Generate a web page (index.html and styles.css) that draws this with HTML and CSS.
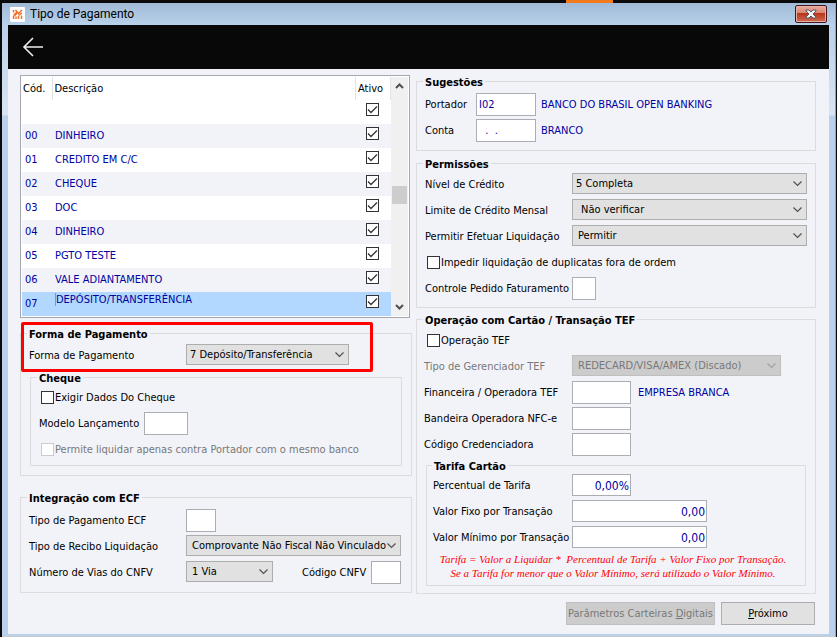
FILE: index.html
```
<!DOCTYPE html>
<html lang="pt-BR">
<head>
<meta charset="utf-8">
<title>Tipo de Pagamento</title>
<link rel="stylesheet" href="styles.css">
</head>
<body>

<div class="backdrop"><span class="accent"></span></div>

<div class="window">
  <div class="titlebar">
    <svg class="logo" viewBox="0 0 15 15">
      <rect width="15" height="15" rx="1" fill="#fff"/>
      <g stroke="#f0702a" stroke-width="1.5" fill="none">
        <path d="M3.500 3v2.500M5.500 3l2.500 3M12 3L8 7M3.500 8.500L7 5M3.500 12V9.500L7 6.500M12 6L8.500 8.500M6 12V9.500M8.500 9v3M11.500 8.500V12"/>
      </g>
    </svg>
    <span class="title">Tipo de Pagamento</span>
    <button class="close" aria-label="Fechar">
      <svg viewBox="0 0 12 10" width="12" height="10">
        <path d="M1 1h3l2 2 2-2h3v1L8 5l3 3v1H8L6 7 4 9H1V8l3-3-3-3z" fill="#f4f4f4" stroke="#535666"/>
      </svg>
    </button>
  </div>

  <div class="client">
    <div class="toolbar">
      <button class="back" aria-label="Voltar">
        <svg viewBox="0 0 22 20" width="22" height="20">
          <path d="M11 1L2 10l9 9M2 10h19" fill="none" stroke="#eee" stroke-width="1.6"/>
        </svg>
      </button>
    </div>

    <div class="content">
      <div class="column left">
        <div class="grid">
          <table>
            <thead>
              <tr><th class="code">Cód.</th><th>Descrição</th><th class="active">Ativo</th></tr>
            </thead>
            <tbody>
              <tr><td></td><td></td><td><input type="checkbox" aria-label="Ativo" checked></td></tr>
              <tr><td>00</td><td>DINHEIRO</td><td><input type="checkbox" aria-label="Ativo 00" checked></td></tr>
              <tr><td>01</td><td>CREDITO EM C/C</td><td><input type="checkbox" aria-label="Ativo 01" checked></td></tr>
              <tr><td>02</td><td>CHEQUE</td><td><input type="checkbox" aria-label="Ativo 02" checked></td></tr>
              <tr><td>03</td><td>DOC</td><td><input type="checkbox" aria-label="Ativo 03" checked></td></tr>
              <tr><td>04</td><td>DINHEIRO</td><td><input type="checkbox" aria-label="Ativo 04" checked></td></tr>
              <tr><td>05</td><td>PGTO TESTE</td><td><input type="checkbox" aria-label="Ativo 05" checked></td></tr>
              <tr><td>06</td><td>VALE ADIANTAMENTO</td><td><input type="checkbox" aria-label="Ativo 06" checked></td></tr>
              <tr class="selected"><td>07</td><td class="editing"><span>DEPÓSITO/TRANSFERÊNCIA</span></td><td><input type="checkbox" aria-label="Ativo 07" checked></td></tr>
            </tbody>
          </table>
          <div class="scrollbar">
            <svg viewBox="0 0 9 6" width="9" height="6"><path d="M1 5l3.5-3.5L8 5" fill="none" stroke="#505050" stroke-width="2"/></svg>
            <span class="thumb"></span>
            <svg viewBox="0 0 9 6" width="9" height="6"><path d="M1 1l3.5 3.5L8 1" fill="none" stroke="#505050" stroke-width="2"/></svg>
          </div>
        </div>

        <fieldset class="payment">
          <legend>Forma de Pagamento</legend>
          <div class="row">
            <label for="forma">Forma de Pagamento</label>
            <select id="forma" class="w163 tight"><option>7 Depósito/Transferência</option></select>
          </div>
          <span class="highlight"></span>

          <fieldset class="cheque">
            <legend>Cheque</legend>
            <div class="row check"><input type="checkbox" id="exigir"><label for="exigir">Exigir Dados Do Cheque</label></div>
            <div class="row">
              <label for="modelo">Modelo Lançamento</label>
              <input type="text" id="modelo" class="w44">
            </div>
            <div class="row check"><input type="checkbox" id="permite" disabled><label for="permite">Permite liquidar apenas contra Portador com o mesmo banco</label></div>
          </fieldset>
        </fieldset>

        <fieldset class="ecf">
          <legend>Integração com ECF</legend>
          <div class="row">
            <label for="tipo-ecf">Tipo de Pagamento ECF</label>
            <input type="text" id="tipo-ecf" class="w30">
          </div>
          <div class="row">
            <label for="recibo">Tipo de Recibo Liquidação</label>
            <select id="recibo" class="w215"><option>Comprovante Não Fiscal Não Vinculado</option></select>
          </div>
          <div class="row">
            <label for="vias">Número de Vias do CNFV</label>
            <select id="vias" class="w87"><option>1 Via</option></select>
            <label for="cnfv" class="cnfv">Código CNFV</label>
            <input type="text" id="cnfv" class="w30">
          </div>
        </fieldset>
      </div>

      <div class="column right">
        <fieldset class="suggestions">
          <legend>Sugestões</legend>
          <div class="row">
            <label for="portador">Portador</label>
            <input type="text" id="portador" class="w60" value="I02">
            <span class="value">BANCO DO BRASIL OPEN BANKING</span>
          </div>
          <div class="row">
            <label for="conta">Conta</label>
            <input type="text" id="conta" class="w60" value="  .  .">
            <span class="value">BRANCO</span>
          </div>
        </fieldset>

        <fieldset class="permissions">
          <legend>Permissões</legend>
          <div class="row">
            <label for="nivel">Nível de Crédito</label>
            <select id="nivel" class="w235 tight"><option>5 Completa</option></select>
          </div>
          <div class="row">
            <label for="limite">Limite de Crédito Mensal</label>
            <select id="limite" class="w235 indent"><option>Não verificar</option></select>
          </div>
          <div class="row">
            <label for="efetuar">Permitir Efetuar Liquidação</label>
            <select id="efetuar" class="w235"><option>Permitir</option></select>
          </div>
          <div class="row check"><input type="checkbox" id="impedir"><label for="impedir">Impedir liquidação de duplicatas fora de ordem</label></div>
          <div class="row">
            <label for="controle">Controle Pedido Faturamento</label>
            <input type="text" id="controle" class="w24">
          </div>
        </fieldset>

        <fieldset class="card">
          <legend>Operação com Cartão / Transação TEF</legend>
          <div class="row check"><input type="checkbox" id="tef"><label for="tef">Operação TEF</label></div>
          <div class="row disabled">
            <label for="gerenciador">Tipo de Gerenciador TEF</label>
            <select id="gerenciador" class="w209" disabled><option>REDECARD/VISA/AMEX (Discado)</option></select>
          </div>
          <div class="row">
            <label for="financeira">Financeira / Operadora TEF</label>
            <input type="text" id="financeira" class="w59">
            <span class="value">EMPRESA BRANCA</span>
          </div>
          <div class="row">
            <label for="bandeira">Bandeira Operadora NFC-e</label>
            <input type="text" id="bandeira" class="w59">
          </div>
          <div class="row">
            <label for="credenciadora">Código Credenciadora</label>
            <input type="text" id="credenciadora" class="w59">
          </div>

          <fieldset class="fee">
            <legend>Tarifa Cartão</legend>
            <div class="row">
              <label for="percentual">Percentual de Tarifa</label>
              <input type="text" id="percentual" class="w59 number" value="0,00%">
            </div>
            <div class="row">
              <label for="fixo">Valor Fixo por Transação</label>
              <input type="text" id="fixo" class="w135 number" value="0,00">
            </div>
            <div class="row">
              <label for="minimo">Valor Mínimo por Transação</label>
              <input type="text" id="minimo" class="w135 number" value="0,00">
            </div>
            <p class="note">Tarifa = Valor a Liquidar *&nbsp; Percentual de Tarifa + Valor Fixo por Transação.<br>Se a Tarifa for menor que o Valor Mínimo, será utilizado o Valor Mínimo.</p>
          </fieldset>
        </fieldset>
      </div>
    </div>

    <div class="actions">
      <button class="btn wallets" disabled>Parâmetros Carteiras <u>D</u>igitais</button>
      <button class="btn next"><u>P</u>róximo</button>
    </div>
  </div>
</div>

</body>
</html>
```

FILE: styles.css
```
* {
    box-sizing: border-box;
}

body {
    margin: 0;
    min-height: 100vh;
    display: flex;
    flex-direction: column;
    background-color: #0a0a0a;
    color: #000;
    font-family: "DejaVu Sans Condensed", "Noto Sans", sans-serif;
    font-size: 11px;
    line-height: 15px;
}

button, input, select {
    font: inherit;
    color: inherit;
    margin: 0;
}

/* Strip of the main program seen behind the window */
.backdrop {
    height: 3px;
    display: flex;
}

.accent {
    width: 47px;
    margin-left: 566px;
    background-color: #f07a1c;
}

.window {
    flex: 1;
    display: flex;
    flex-direction: column;
    margin: 0 1px 0 2px;
    padding: 0 6px 2px;
    border-right: 1px solid #38c8e8;
    border-bottom: 1px solid #c8ccd0;
    background: linear-gradient(#a0bad6, #b9d1ea 22px, #d8e5f3 112px, #b9d1ea 113px);
}

/* Title bar */
.titlebar {
    height: 22px;
    display: flex;
    align-items: center;
    padding: 0 2px;
}

.logo {
    width: 15px;
    height: 15px;
}

.title {
    flex: 1;
    margin-left: 5px;
    font-family: Roboto, sans-serif;
    font-size: 12px;
}

.close {
    width: 32px;
    height: 18px;
    padding: 0;
    display: flex;
    align-items: center;
    justify-content: center;
    border: 1px solid #47131c;
    border-radius: 2px;
    background: linear-gradient(#e9a99b, #d98573 45%, #b8351b 46%, #cf6b52);
    box-shadow: inset 0 0 0 1px #e5b0a5;
}

.client {
    flex: 1;
    background-color: #f2f3f9;
}

.toolbar {
    height: 44px;
    display: flex;
    align-items: center;
    padding-left: 14px;
    background-color: #080808;
}

.back {
    padding: 0;
    border: none;
    background: none;
    display: flex;
}

.content {
    display: grid;
    grid-template-columns: 392fr 400fr;
    gap: 4px;
    padding: 5px 13px 0 12px;
}

.column {
    display: flex;
    flex-direction: column;
}

/* Payment type list */
.grid {
    display: flex;
    margin: 1px 2px 8px 0;
    padding: 1px;
    border: 1px solid #a5a7b0;
    background-color: #fff;
}

table {
    flex: 1;
    border-collapse: collapse;
    table-layout: fixed;
    color: #0000a0;
}

th {
    height: 23px;
    padding: 0 2px;
    border-right: 1px solid #e2e2e2;
    color: #000;
    font-weight: normal;
    text-align: left;
}

th.code {
    width: 30px;
    padding: 0 1px;
}

th.active {
    width: 35px;
}

td {
    height: 24px;
    padding: 0 3px 2px;
}

td:last-child {
    padding: 3px 10px 0;
    vertical-align: top;
}

tbody tr:nth-child(even) {
    background-color: #f2f3f9;
}

tbody tr.selected {
    background-color: #b2d8ff;
}

.editing {
    vertical-align: top;
}

.editing span {
    border-left: 1px solid #b0a020;
}

.scrollbar {
    width: 17px;
    display: flex;
    flex-direction: column;
    align-items: center;
    padding: 6px 0;
    background-color: #f0f0f0;
}

.thumb {
    width: 15px;
    height: 18px;
    margin: 97px 0 auto;
    background-color: #cdcdcd;
}

/* Group boxes */
fieldset {
    min-width: 0;
    margin: 0;
    padding: 0 8px 8px;
    border: 1px solid #dcdcdf;
}

legend {
    margin-left: -2px;
    padding: 2px 2px 0;
    font-weight: bold;
    line-height: 13px;
}

.row {
    height: 23px;
    display: flex;
    align-items: flex-start;
}

.row + .row {
    margin-top: 3px;
}

.row label, .value {
    line-height: 24px;
    white-space: nowrap;
}

.value {
    color: #0000a0;
    margin-left: 5px;
}

input[type=text] {
    height: 23px;
    padding: 0 2px;
    border: 1px solid #abadb3;
    border-radius: 0;
    background-color: #fff;
    color: #0000a0;
}

input.number {
    height: 22px;
    padding: 1px 1px 0;
    font-size: 12px;
    text-align: right;
}

select {
    appearance: none;
    height: 21px;
    padding: 0 5px;
    border: 1px solid #adadad;
    border-radius: 0;
    background: #e1e1e1 url("data:image/svg+xml,%3Csvg xmlns='http://www.w3.org/2000/svg' width='9' height='6'%3E%3Cpath d='M.5.5l4 4 4-4' fill='none' stroke='%23505050' stroke-width='1.2'/%3E%3C/svg%3E") no-repeat right 4px center;
}

select.tight {
    padding: 0 3px;
}

select:disabled {
    opacity: 1;
    border-color: #bfbfbf;
    background-color: #ccc;
    background-image: url("data:image/svg+xml,%3Csvg xmlns='http://www.w3.org/2000/svg' width='9' height='6'%3E%3Cpath d='M.5.5l4 4 4-4' fill='none' stroke='%23a0a0a0' stroke-width='1.2'/%3E%3C/svg%3E");
    color: #787878;
}

input[type=checkbox] {
    appearance: none;
    display: block;
    width: 13px;
    height: 13px;
    border: 1px solid #333;
    background-color: #fff;
}

input[type=checkbox]:checked {
    background-image: url("data:image/svg+xml,%3Csvg xmlns='http://www.w3.org/2000/svg' width='11' height='11'%3E%3Cpath d='M1 5.5l3 3 6-6' fill='none' stroke='%23333' stroke-width='1.3'/%3E%3C/svg%3E");
}

input[type=checkbox]:disabled {
    border-color: #ccc;
}

.check {
    align-items: center;
    gap: 1px;
    padding-left: 2px;
}

.disabled label, input:disabled + label {
    color: #787878;
}

.w24 { width: 24px; }
.w30 { width: 30px; }
.w44 { width: 44px; }
.w59 { width: 59px; }
.w60 { width: 60px; }
.w87 { width: 87px; }
.w135 { width: 135px; }
.w163 { width: 163px; }
.w209 { width: 209px; }
.w215 { width: 215px; }
.w235 { width: 235px; }

/* Forma de Pagamento */
.payment {
    position: relative;
    margin-bottom: 14px;
    padding-top: 3px;
    padding-bottom: 9px;
}

.payment > .row label, .ecf .row label:first-child {
    width: 157px;
}

.highlight {
    position: absolute;
    top: -12px;
    left: 0;
    width: 352px;
    height: 50px;
    margin-top: -7px;
    border: 3px solid #f00;
    border-radius: 2px;
    pointer-events: none;
}

.cheque {
    margin: 3px 1px 0;
    padding: 1px 8px 4px;
}

.cheque .row label {
    width: 105px;
}

/* Integração com ECF */
.ecf {
    padding-top: 4px;
}

.ecf .w30, .ecf .w87, .ecf .w215 {
    flex-shrink: 0;
}

.ecf label.cnfv {
    margin-left: 29px;
    width: 69px;
}

/* Right column */
.suggestions {
    margin-bottom: 5px;
    padding-top: 4px;
}

.suggestions label {
    width: 51px;
}

.permissions {
    margin-bottom: 4px;
    padding-top: 2px;
    padding-bottom: 7px;
}

.permissions .row:not(.check) label {
    width: 147px;
}

select.indent {
    padding-left: 8px;
}

.card {
    padding: 2px 7px 7px;
}

.card legend {
    margin-left: -1px;
}

.card .check {
    padding-left: 3px;
}

.card .row:not(.check) label {
    width: 148px;
}

.card .value {
    margin-left: 7px;
}

.fee {
    margin: 2px 2px 0;
    padding: 1px 6px 5px;
}

.card .fee .row label {
    width: 139px;
}

.note {
    margin: 3px 6px 0 0;
    color: #f00;
    font-family: "Liberation Serif", serif;
    font-style: italic;
    line-height: 14px;
    text-align: center;
    white-space: nowrap;
}

/* Buttons below the form */
.actions {
    display: flex;
    justify-content: flex-end;
    gap: 6px;
    padding: 8px 14px 9px;
}

.btn {
    height: 23px;
    padding: 0;
    border: 1px solid #adadad;
    background-color: #e1e1e1;
    white-space: nowrap;
}

.btn:disabled {
    border-color: #bfbfbf;
    background-color: #ccc;
    color: #787878;
}

.wallets {
    width: 149px;
}

.next {
    width: 94px;
}
```
